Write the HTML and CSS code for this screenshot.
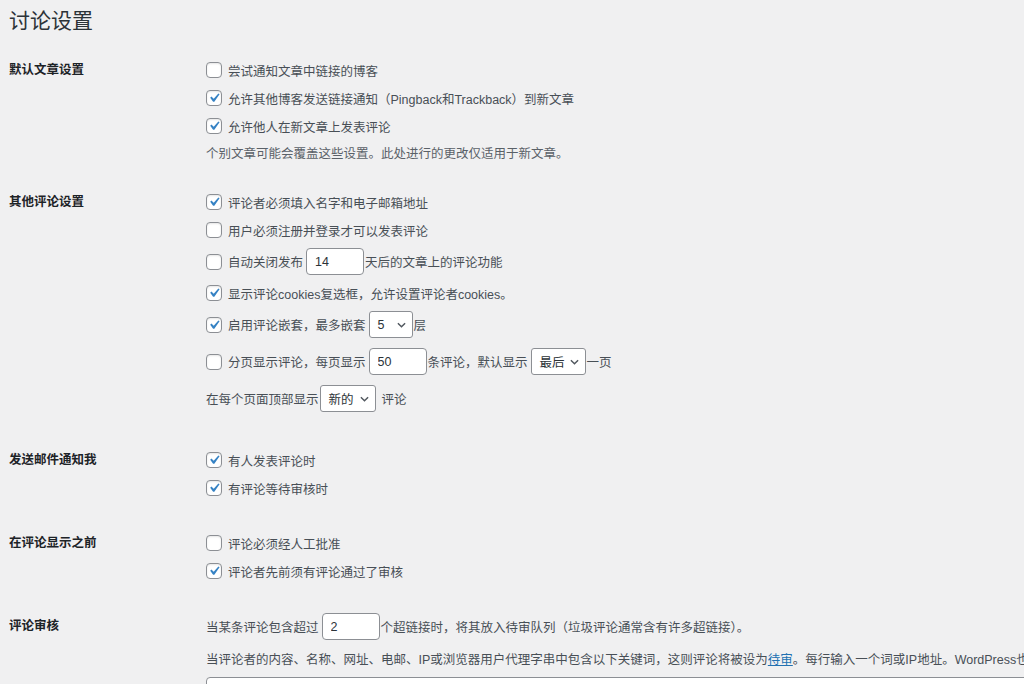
FILE: index.html
```html
<!DOCTYPE html>
<html lang="zh-CN">
<head>
    <meta charset="UTF-8">
    <meta name="viewport" content="width=device-width, initial-scale=1.0">
    <title>讨论设置</title>
    <link rel="stylesheet" href="styles.css">
</head>
<body>
<div class="wrap">
    <h1>讨论设置</h1>

    <div class="section">
        <div class="section-label">默认文章设置</div>
        <div class="section-body">
            <label class="row"><span class="check"></span>尝试通知文章中链接的博客</label>
            <label class="row"><span class="check"><svg viewBox="0 0 20 20"><path d="M14.83 4.89l1.34.94-5.81 8.38H9.02L5.78 9.67l1.34-1.250 2.57 2.4z"/></svg></span>允许其他博客发送链接通知（Pingback和Trackback）到新文章</label>
            <label class="row"><span class="check"><svg viewBox="0 0 20 20"><path d="M14.83 4.89l1.34.94-5.81 8.38H9.02L5.78 9.67l1.34-1.25 2.57 2.4z"/></svg></span>允许他人在新文章上发表评论</label>
            <p class="description">个别文章可能会覆盖这些设置。此处进行的更改仅适用于新文章。</p>
        </div>
    </div>

    <div class="section section-tall">
        <div class="section-label">其他评论设置</div>
        <div class="section-body">
            <label class="row"><span class="check"><svg viewBox="0 0 20 20"><path d="M14.83 4.89l1.34.94-5.81 8.38H9.02L5.78 9.67l1.34-1.25 2.57 2.4z"/></svg></span>评论者必须填入名字和电子邮箱地址</label>
            <label class="row"><span class="check"></span>用户必须注册并登录才可以发表评论</label>
            <div class="row"><span class="check"></span>自动关闭发布<input type="text" class="small-text" value="14">天后的文章上的评论功能</div>
            <label class="row"><span class="check"><svg viewBox="0 0 20 20"><path d="M14.83 4.89l1.34.94-5.81 8.38H9.02L5.78 9.67l1.34-1.25 2.57 2.4z"/></svg></span>显示评论cookies复选框，允许设置评论者cookies。</label>
            <div class="row"><span class="check"><svg viewBox="0 0 20 20"><path d="M14.83 4.89l1.34.94-5.81 8.38H9.02L5.78 9.67l1.34-1.25 2.57 2.4z"/></svg></span>启用评论嵌套，最多嵌套<span class="select select-num">5<svg viewBox="0 0 10 6"><path d="M1 1l4 4 4-4"/></svg></span>层</div>
            <div class="row row-spaced"><span class="check"></span>分页显示评论，每页显示<input type="text" class="small-text" value="50">条评论，默认显示<span class="select">最后<svg viewBox="0 0 10 6"><path d="M1 1l4 4 4-4"/></svg></span>一页</div>
            <div class="row row-spaced">在每个页面顶部显示<span class="select select-flush">新的<svg viewBox="0 0 10 6"><path d="M1 1l4 4 4-4"/></svg></span>评论</div>
        </div>
    </div>

    <div class="section section-mid">
        <div class="section-label">发送邮件通知我</div>
        <div class="section-body">
            <label class="row"><span class="check"><svg viewBox="0 0 20 20"><path d="M14.83 4.89l1.34.94-5.81 8.38H9.02L5.78 9.67l1.34-1.25 2.57 2.4z"/></svg></span>有人发表评论时</label>
            <label class="row"><span class="check"><svg viewBox="0 0 20 20"><path d="M14.83 4.89l1.34.94-5.81 8.38H9.02L5.78 9.67l1.34-1.25 2.57 2.4z"/></svg></span>有评论等待审核时</label>
        </div>
    </div>

    <div class="section">
        <div class="section-label">在评论显示之前</div>
        <div class="section-body">
            <label class="row"><span class="check"></span>评论必须经人工批准</label>
            <label class="row"><span class="check"><svg viewBox="0 0 20 20"><path d="M14.83 4.89l1.34.94-5.81 8.38H9.02L5.78 9.67l1.34-1.25 2.57 2.4z"/></svg></span>评论者先前须有评论通过了审核</label>
        </div>
    </div>

    <div class="section">
        <div class="section-label section-label-input">评论审核</div>
        <div class="section-body">
            <div class="row">当某条评论包含超过<input type="text" class="small-text input-flush" value="2">个超链接时，将其放入待审队列（垃圾评论通常含有许多超链接）。</div>
            <div class="row">当评论者的内容、名称、网址、电邮、IP或浏览器用户代理字串中包含以下关键词，这则评论将被设为<a href="#">待审</a>。每行输入一个词或IP地址。WordPress也将在单词内部进行匹配。</div>
            <textarea class="large-text" rows="10"></textarea>
        </div>
    </div>
</div>
</body>
</html>
```

FILE: styles.css
```css
html,
body {
    margin: 0;
    background-color: #f0f0f1;
    overflow: hidden;
}
body {
    font-family: "Liberation Sans", "Noto Sans CJK SC", sans-serif;
    font-size: 12.5px;
    color: #484f56;
}
.wrap {
    padding-left: 9px;
    width: 1300px;
}
h1 {
    font-size: 21px;
    font-weight: 400;
    line-height: 30px;
    color: #2c3338;
    margin: 6px 0 8px;
}
.section {
    display: flex;
    padding: 12px 0;
}
.section-tall {
    padding-bottom: 18px;
}
.section-mid {
    padding-bottom: 15px;
}
.section-label {
    width: 197px;
    flex-shrink: 0;
    line-height: 28px;
    font-weight: 700;
    color: #1d2327;
}
.section-label-input {
    line-height: 35px;
}
.section-body {
    flex: 1;
}
.row {
    display: flex;
    align-items: center;
    min-height: 28px;
    white-space: nowrap;
}
.row-spaced {
    margin-top: 2px;
}
.description {
    margin: 4px 0 0;
    line-height: 20px;
    color: #5a6168;
}
.check {
    width: 14px;
    height: 14px;
    border: 1px solid #8c8f94;
    border-radius: 4px;
    background-color: #fff;
    margin-right: 6px;
    flex-shrink: 0;
    box-shadow: inset 0 1px 2px rgba(0, 0, 0, 0.1);
}
.check svg {
    display: block;
    width: 18px;
    height: 18px;
    margin: -2px;
    fill: #3582c4;
}
input.small-text {
    box-sizing: border-box;
    width: 58px;
    height: 27px;
    margin: 4px 1px 4px 3px;
    padding: 0 8px;
    border: 1px solid #8c8f94;
    border-radius: 4px;
    background-color: #fff;
    font-family: inherit;
    font-size: 12.5px;
    color: #2c3338;
}
.input-flush {
    margin-left: 1px;
}
.select {
    box-sizing: border-box;
    display: inline-flex;
    align-items: center;
    justify-content: space-between;
    width: 55px;
    height: 27px;
    margin: 4px 1px 4px 3px;
    padding: 0 6px 0 8px;
    border: 1px solid #8c8f94;
    border-radius: 3px;
    background-color: #fff;
    color: #2c3338;
}
.select-num {
    width: 44px;
}
.select-flush {
    width: 56px;
    margin-left: 1px;
    margin-right: 6px;
}
.select svg {
    width: 9px;
    height: 6px;
    fill: none;
    stroke: #50575e;
    stroke-width: 1.6;
}
a {
    color: #2271b1;
}
textarea.large-text {
    display: block;
    box-sizing: border-box;
    width: 1000px;
    height: 160px;
    margin-top: 5px;
    border: 1px solid #8c8f94;
    border-radius: 4px;
    background-color: #fff;
}
```
